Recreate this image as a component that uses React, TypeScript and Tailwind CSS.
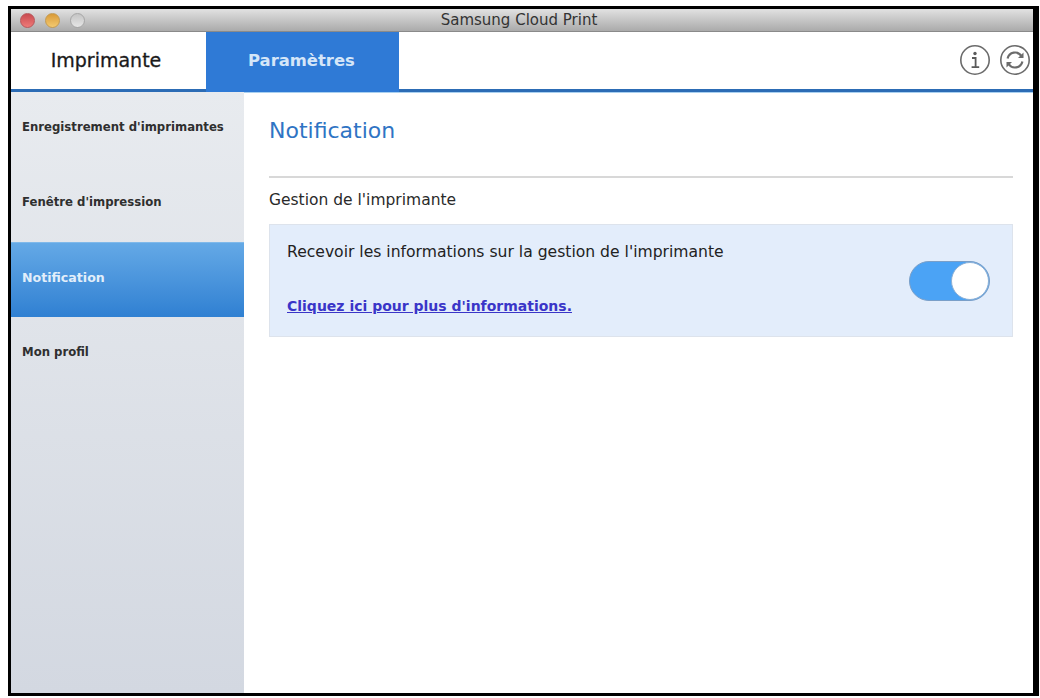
const menuItems = ["Enregistrement d'imprimantes", "Fenêtre d'impression", "Notification", "Mon profil"];

const InfoIcon = () => (
  <svg width="32" height="32" viewBox="0 0 32 32" fill="none" stroke="#6b6b6b">
    <circle cx="16" cy="16" r="14.2" strokeWidth="1.6" />
    <circle cx="16" cy="9.5" r="1.7" fill="#5a5a5a" stroke="none" />
    <path d="M13 14h3.6v9M12.6 23.2h7.6" strokeWidth="1.8" stroke="#5a5a5a" />
  </svg>
);

const SyncIcon = () => (
  <svg width="32" height="32" viewBox="0 0 32 32" fill="none" stroke="#6b6b6b">
    <circle cx="16" cy="16" r="14.2" strokeWidth="1.6" />
    <path d="M8.6 14.5A7.6 7.6 0 0 1 22.4 12" strokeWidth="2.2" />
    <path d="M23.4 17.5A7.6 7.6 0 0 1 9.6 20" strokeWidth="2.2" />
    <path d="M24.5 8.5v5.5h-5.5z" fill="#6b6b6b" stroke="none" />
    <path d="M7.5 23.5V18h5.5z" fill="#6b6b6b" stroke="none" />
  </svg>
);

const App = () => {
  return (
    <div className="w-[1040px] h-[698px] bg-white pt-[6px] pl-[8px] pr-[1px] pb-[2px] font-['DejaVu_Sans',sans-serif] overflow-hidden">
      <div className="h-full flex flex-col border-[3px] border-r-[6px] border-black bg-white">
        {/* Title bar */}
        <div className="relative h-[23px] shrink-0 flex items-center bg-gradient-to-b from-[#e2e2e2] to-[#aaaaaa] border-b border-[#8a8a8a]">
          <div className="flex items-center gap-[10px] pl-[9px]">
            <span className="w-[15px] h-[15px] rounded-full bg-gradient-to-b from-[#c94a50] to-[#ee7a78] border border-[#b8565a]" />
            <span className="w-[15px] h-[15px] rounded-full bg-gradient-to-b from-[#d99a35] to-[#f3ca70] border border-[#c49a50]" />
            <span className="w-[15px] h-[15px] rounded-full bg-gradient-to-b from-[#c4c4c4] to-[#e6e6e6] border border-[#a6a6a6]" />
          </div>
          <div className="flex-1 text-center text-[15px] text-[#333] pr-[80px]">Samsung Cloud Print</div>
        </div>

        {/* Tabs */}
        <div className="h-[60px] shrink-0 flex border-b-[3px] border-[#2c6cb5] shadow-[0_1px_0_#a9d0f0]">
          <div className="w-[195px] flex items-center justify-center text-[19px] text-[#1a1a1a] [-webkit-text-stroke:0.3px] pr-[5px]">Imprimante</div>
          <div className="w-[193px] -mb-[3px] bg-[#2f7ad6] flex items-center pl-[42px] pb-[1px] text-[16.4px] font-bold text-[#d5e6f8]">Paramètres</div>
          <div className="flex-1 flex items-center justify-end gap-[8px] pr-[2px] pb-[1px]">
            <InfoIcon />
            <SyncIcon />
          </div>
        </div>

        <div className="flex-1 flex min-h-0">
          {/* Sidebar */}
          <div className="w-[233px] shrink-0 bg-gradient-to-b from-[#e8ebef] to-[#d3d8e1]">
            {menuItems.map((item) => (
              <div
                key={item}
                className={
                  item === "Notification"
                    ? "h-[75px] flex items-center pl-[11px] pb-[3px] text-[12.6px] font-bold text-[#e2eefa] bg-gradient-to-b from-[#64a9e6] to-[#2f80d2] border-t border-[#7fb9ea]"
                    : "h-[75px] flex items-center pl-[11px] pb-[3px] text-[11.7px] font-bold text-[#2f2f2f]"
                }
              >
                {item}
              </div>
            ))}
          </div>

          {/* Content */}
          <div className="flex-1 pl-[25px] pr-[20px]">
            <h1 className="h-[86px] flex items-center border-b-2 border-[#d8d8d8] text-[22px] text-[#2f74c4] pb-[8px]">Notification</h1>
            <div className="h-[46px] flex items-center text-[15.5px] text-[#2a2a2a] pb-[1px]">Gestion de l'imprimante</div>
            <div className="h-[113px] flex items-start justify-between bg-[#e3edfb] border border-[#dde3ec] pl-[17px] pr-[22px] pt-[17px]">
              <div className="flex flex-col gap-[35px]">
                <div className="text-[15.6px] leading-[20px] text-[#222]">Recevoir les informations sur la gestion de l'imprimante</div>
                <a className="text-[14px] leading-[18px] font-bold text-[#3a35c8] underline">Cliquez ici pour plus d'informations.</a>
              </div>
              <div className="w-[81px] h-[40px] mt-[19px] rounded-full bg-[#4ba3f5] border border-[#7a9fc8] flex items-center justify-end">
                <span className="w-[38px] h-[38px] rounded-full bg-white border border-[#8cb0d6]" />
              </div>
            </div>
          </div>
        </div>
      </div>
    </div>
  );
};

export default App;
